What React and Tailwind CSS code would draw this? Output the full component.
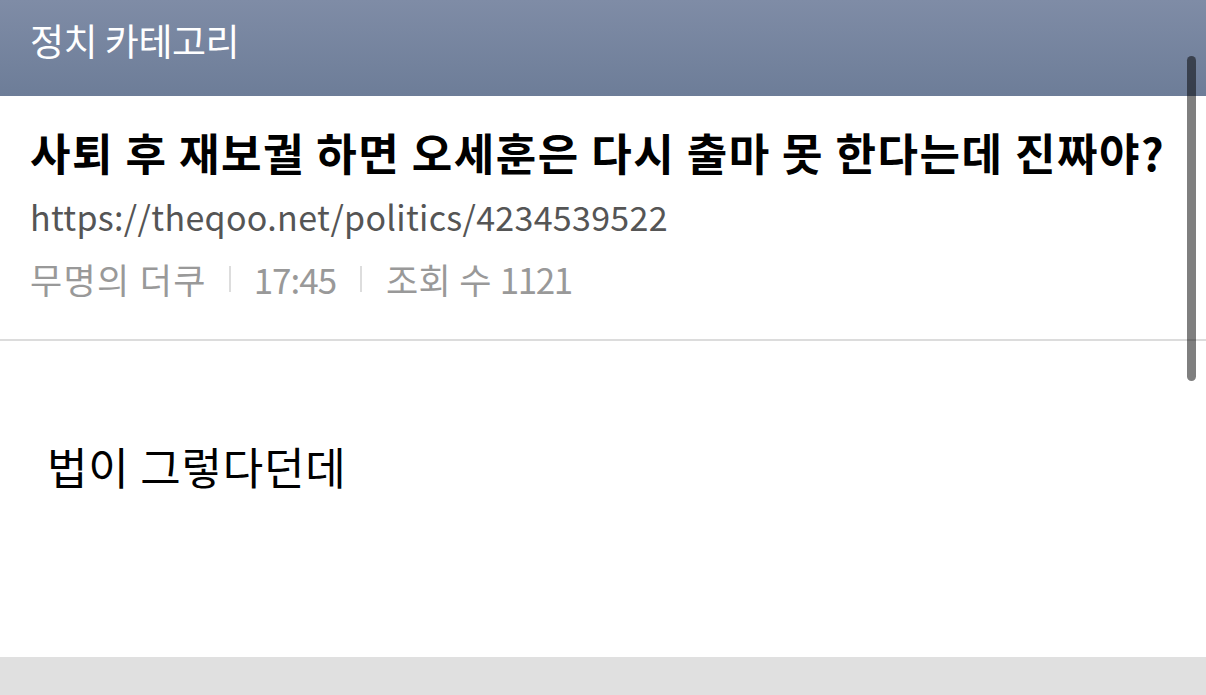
export default function App() {
  const font = { fontFamily: '"Noto Sans CJK KR", "Noto Sans", sans-serif' };
  return (
    <div className="relative w-full h-[695px] flex flex-col bg-white overflow-hidden" style={font}>
      <div className="h-[96px] shrink-0 bg-gradient-to-b from-[#7f8ca6] to-[#6d7d98] px-[30px] text-white text-[37px] leading-[80px] tracking-[-0.5px]">
        정치 카테고리
      </div>
      <div className="px-[30px] pt-[28px] pb-[38px] border-b-2 border-[#dcdcdc]">
        <div className="text-[44px] leading-[56px] font-bold text-black tracking-[1.5px] whitespace-nowrap">
          사퇴 후 재보궐 하면 오세훈은 다시 출마 못 한다는데 진짜야?
        </div>
        <div className="mt-[15px] text-[34px] leading-[44px] text-[#555555] tracking-[0.3px]">
          https://theqoo.net/politics/4234539522
        </div>
        <div className="mt-[18px] flex items-center text-[35px] leading-[44px] text-[#999999]">
          <span className="tracking-[1.3px]">무명의 더쿠</span>
          <span className="ml-[22px] mr-[23px] w-[2px] h-[26px] bg-[#dddddd]" />
          <span className="tracking-[-1px]">17:45</span>
          <span className="mx-[24px] w-[2px] h-[26px] bg-[#dddddd]" />
          <span className="tracking-[0.3px]">
            조회 수 <span className="tracking-[-1.5px]">1121</span>
          </span>
        </div>
      </div>
      <div className="px-[47px] pt-[97px] text-[44px] leading-[56px] text-black tracking-[0.8px]">
        법이 그렇다던데
      </div>
      <div className="flex-1" />
      <div className="h-[38px] shrink-0 bg-[#e0e0e0]" />
      <div className="absolute left-[1187px] top-[56px] w-[9px] h-[325px] rounded-full bg-black/50" />
    </div>
  );
}
